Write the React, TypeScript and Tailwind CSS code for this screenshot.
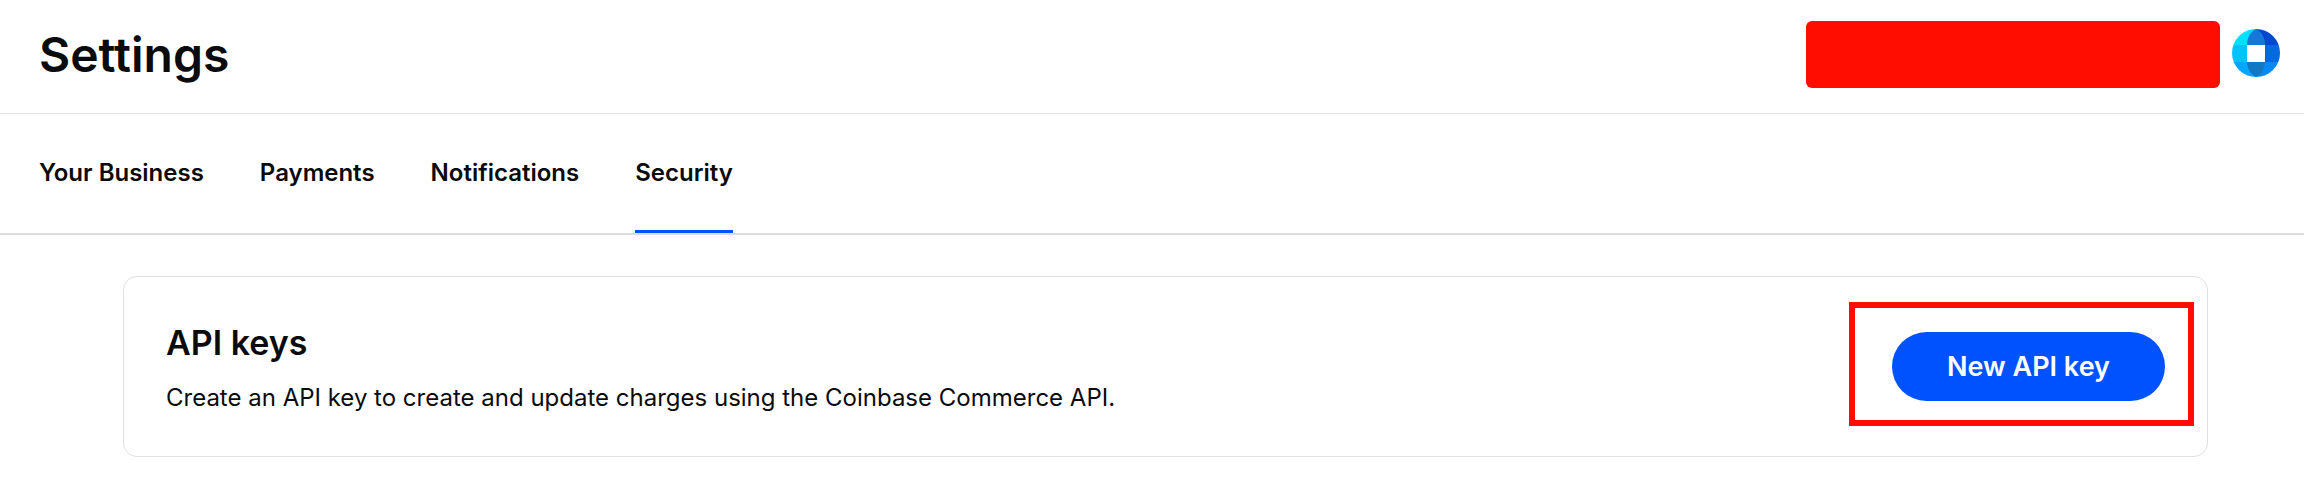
import { useState } from "react"

const tabs = ["Your Business", "Payments", "Notifications", "Security"];

const Avatar = () => {
    return (
        <svg viewBox="0 0 48 48" className="size-12" aria-hidden="true">
            <defs>
                <clipPath id="globe">
                    <circle cx="24" cy="24" r="24" />
                </clipPath>
                <clipPath id="lens">
                    <path d="M24 0C18 3 15 9 15 16V32C15 39 18 45 24 48C30 45 33 39 33 32V16C33 9 30 3 24 0Z" />
                </clipPath>
            </defs>
            <g clipPath="url(#globe)">
                <rect width="24" height="16" fill="#00dfff" />
                <rect y="16" width="24" height="17" fill="#00c2ff" />
                <rect y="33" width="24" height="15" fill="#05a6ff" />
                <rect x="24" width="24" height="16" fill="#0048cc" />
                <rect x="24" y="16" width="24" height="17" fill="#0269e0" />
                <rect x="24" y="33" width="24" height="15" fill="#0489f5" />
            </g>
            <g clipPath="url(#lens)">
                <rect width="48" height="16" fill="#1578d8" />
                <rect y="16" width="48" height="17" fill="#ffffff" />
                <rect y="33" width="48" height="15" fill="#1278c4" />
            </g>
        </svg>
    )
}

const App = () => {
    const [active, setActive] = useState("Security");

    return (
        <div className="bg-white text-[#0a0b0d] font-['Inter',sans-serif]">
            <header className="flex items-center justify-between border-b border-[#e3e4e6] pt-[21px] pb-[25px] pl-[39px] pr-6">
                <h1 className="text-5xl font-semibold">Settings</h1>
                <div className="flex items-start gap-3">
                    <div className="h-[67px] w-[414px] rounded-md bg-[#ff0d00]"></div>
                    <button type="button" aria-label="Account" className="pt-2">
                        <Avatar />
                    </button>
                </div>
            </header>

            <nav className="flex gap-14 border-b-2 border-[#dbdcdf] px-[39px]">
                {tabs.map((tab) => (
                    <button
                        key={tab}
                        type="button"
                        onClick={() => setActive(tab)}
                        className={`border-b-3 pt-[41px] pb-[39px] text-2xl leading-9 font-semibold ${active === tab ? "border-[#0052ff]" : "border-transparent"}`}
                    >
                        {tab}
                    </button>
                ))}
            </nav>

            <main className="pt-[41px] pb-10 pl-[123px] pr-24">
                <section className="flex items-center justify-between rounded-[14px] border border-[#dfe0e4] py-10 px-[42px]">
                    <div>
                        <h2 className="text-[34px] leading-[51px] font-semibold">API keys</h2>
                        <p className="mt-3 text-2xl leading-9">Create an API key to create and update charges using the Coinbase Commerce API.</p>
                    </div>
                    <div className="relative">
                        <button type="button" className="h-[69px] w-[273px] rounded-full bg-[#0052ff] pt-0.5 text-[27px] font-semibold text-white">
                            New API key
                        </button>
                        {/* highlight */}
                        <div className="pointer-events-none absolute -top-[30px] -right-[29px] -bottom-[25px] -left-[43px] border-6 border-[#ff0d00]"></div>
                    </div>
                </section>
            </main>
        </div>
    )
}

export default App
